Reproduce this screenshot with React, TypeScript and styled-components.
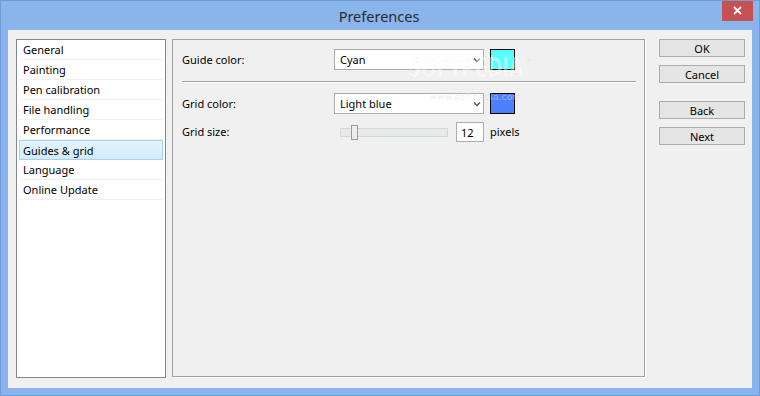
import React from 'react';
import styled, { createGlobalStyle } from 'styled-components';

const GlobalStyle = createGlobalStyle`
  html, body {
    margin: 0;
    padding: 0;
    background: #8ab4ec;
  }
  * {
    box-sizing: border-box;
  }
`;

const uiFont = `"Segoe UI", "Noto Sans", "Liberation Sans", sans-serif`;

const Window = styled.div`
  position: relative;
  width: 760px;
  height: 396px;
  background: #8ab4ec;
  border: 1px solid #6f9bd8;
  display: flex;
  flex-direction: column;
  font-family: ${uiFont};
  font-size: 11px;
  color: #000;
  overflow: hidden;
`;

const TitleBar = styled.div`
  position: relative;
  height: 29px;
  display: flex;
  align-items: center;
  justify-content: center;
`;

const Title = styled.span`
  font-size: 14.5px;
  color: #2b2b2b;
  margin-left: -2px;
  margin-top: 1px;
`;

const CloseButton = styled.div`
  position: absolute;
  top: -1px;
  right: 6px;
  width: 31px;
  height: 21px;
  background: #c75050;
  display: flex;
  align-items: center;
  justify-content: center;
`;

const Client = styled.div`
  flex: 1;
  margin: 0 7px 7px 7px;
  background: #f0f0f0;
  display: flex;
  padding: 9px 7px 10px 8px;
`;

const ListBox = styled.div`
  width: 150px;
  height: 339px;
  background: #fff;
  border: 1px solid #828790;
  padding: 0 2px;
  display: flex;
  flex-direction: column;
`;

const ListItem = styled.div<{ $selected?: boolean }>`
  height: 20px;
  flex: none;
  display: flex;
  align-items: center;
  padding-left: 4px;
  border-bottom: 1px solid #f0f0f0;
  ${({ $selected }) =>
    $selected &&
    `
    background: linear-gradient(#e6f4fd, #d2ebfa);
    border: 1px solid #a5d2f2;
    padding-left: 3px;
  `}
`;

const Panel = styled.div`
  width: 473px;
  height: 338px;
  margin-left: 6px;
  border: 1px solid #a0a0a0;
  box-shadow: 1px 1px 0 #fff;
  padding: 9px 8px 0 9px;
  display: flex;
  flex-direction: column;
`;

const FieldRow = styled.div<{ $gap?: number }>`
  display: grid;
  grid-template-columns: 146px auto auto 1fr;
  align-items: center;
  column-gap: 6px;
  margin-top: ${({ $gap }) => $gap ?? 0}px;
`;

const Label = styled.span`
  line-height: 14px;
`;

const Combo = styled.div`
  width: 150px;
  height: 21px;
  background: #fff;
  border: 1px solid #acacac;
  display: flex;
  align-items: center;
  justify-content: space-between;
  padding: 0 2px 0 5px;
`;

const Swatch = styled.div<{ $color: string }>`
  width: 25px;
  height: 21px;
  background: ${({ $color }) => $color};
  border: 1px solid #000;
`;

const Separator = styled.div`
  height: 1px;
  background: #a0a0a0;
  margin-top: 11px;
  box-shadow: 0 1px 0 #fff;
`;

const SizeControl = styled.div`
  width: 150px;
  display: flex;
  align-items: center;
  gap: 8px;
`;

const SliderTrack = styled.div`
  position: relative;
  flex: 1;
  height: 9px;
  margin-left: 6px;
  background: #e7eaea;
  border: 1px solid #d6d6d6;
`;

const SliderThumb = styled.div`
  position: absolute;
  left: 10px;
  top: -4px;
  width: 7px;
  height: 15px;
  background: #ececec;
  border: 1px solid #9c9c9c;
`;

const NumberBox = styled.div`
  width: 28px;
  height: 20px;
  background: #fff;
  border: 1px solid #abadb3;
  display: flex;
  align-items: center;
  padding-left: 4px;
`;

const Buttons = styled.div`
  width: 86px;
  margin-left: 14px;
  display: flex;
  flex-direction: column;
`;

const Button = styled.div<{ $gap?: number }>`
  height: 18px;
  margin-top: ${({ $gap }) => $gap ?? 0}px;
  background: #e5e5e5;
  border: 1px solid #acacac;
  display: flex;
  align-items: center;
  justify-content: center;
`;

const Watermark = styled.div`
  position: absolute;
  left: 407px;
  top: 52px;
  font-family: "DejaVu Sans", sans-serif;
  font-weight: bold;
  font-size: 26px;
  color: rgba(255, 255, 255, 0.45);
  -webkit-text-stroke: 0.6px rgba(0, 0, 0, 0.08);
  transform: scaleX(0.7);
  transform-origin: left top;
  white-space: nowrap;
  pointer-events: none;
`;

const WatermarkTm = styled.span`
  font-size: 9px;
  vertical-align: 12px;
  margin-left: 4px;
`;

const WatermarkUrl = styled.div`
  position: absolute;
  left: 428px;
  top: 90px;
  font-family: "DejaVu Sans", sans-serif;
  font-size: 9.5px;
  color: rgba(255, 255, 255, 0.5);
  -webkit-text-stroke: 0.4px rgba(0, 0, 0, 0.1);
  pointer-events: none;
`;

const Chevron = () => (
  <svg width="8" height="6" viewBox="0 0 8 6">
    <path d="M1 1.5 L4 4.5 L7 1.5" fill="none" stroke="#555" strokeWidth="1.4" />
  </svg>
);

const pages = [
  'General',
  'Painting',
  'Pen calibration',
  'File handling',
  'Performance',
  'Guides & grid',
  'Language',
  'Online Update',
];

const App: React.FC = () => (
  <>
    <GlobalStyle />
    <Window>
      <TitleBar>
        <Title>Preferences</Title>
        <CloseButton>
          <svg width="9" height="9" viewBox="0 0 9 9">
            <path d="M1 1 L8 8 M8 1 L1 8" stroke="#fff" strokeWidth="1.8" />
          </svg>
        </CloseButton>
      </TitleBar>
      <Client>
        <ListBox>
          {pages.map((p) => (
            <ListItem key={p} $selected={p === 'Guides & grid'}>
              {p}
            </ListItem>
          ))}
        </ListBox>
        <Panel>
          <FieldRow>
            <Label>Guide color:</Label>
            <Combo>
              <span>Cyan</span>
              <Chevron />
            </Combo>
            <Swatch $color="#55ffff" />
          </FieldRow>
          <Separator />
          <FieldRow $gap={11}>
            <Label>Grid color:</Label>
            <Combo>
              <span>Light blue</span>
              <Chevron />
            </Combo>
            <Swatch $color="#4b80ff" />
          </FieldRow>
          <FieldRow $gap={8}>
            <Label>Grid size:</Label>
            <SizeControl>
              <SliderTrack>
                <SliderThumb />
              </SliderTrack>
              <NumberBox>12</NumberBox>
            </SizeControl>
            <Label>pixels</Label>
          </FieldRow>
        </Panel>
        <Buttons>
          <Button>OK</Button>
          <Button $gap={8}>Cancel</Button>
          <Button $gap={18}>Back</Button>
          <Button $gap={8}>Next</Button>
        </Buttons>
      </Client>
      <Watermark>
        SOFTPEDIA<WatermarkTm>™</WatermarkTm>
      </Watermark>
      <WatermarkUrl>www.softpedia.com</WatermarkUrl>
    </Window>
  </>
);

export default App;
